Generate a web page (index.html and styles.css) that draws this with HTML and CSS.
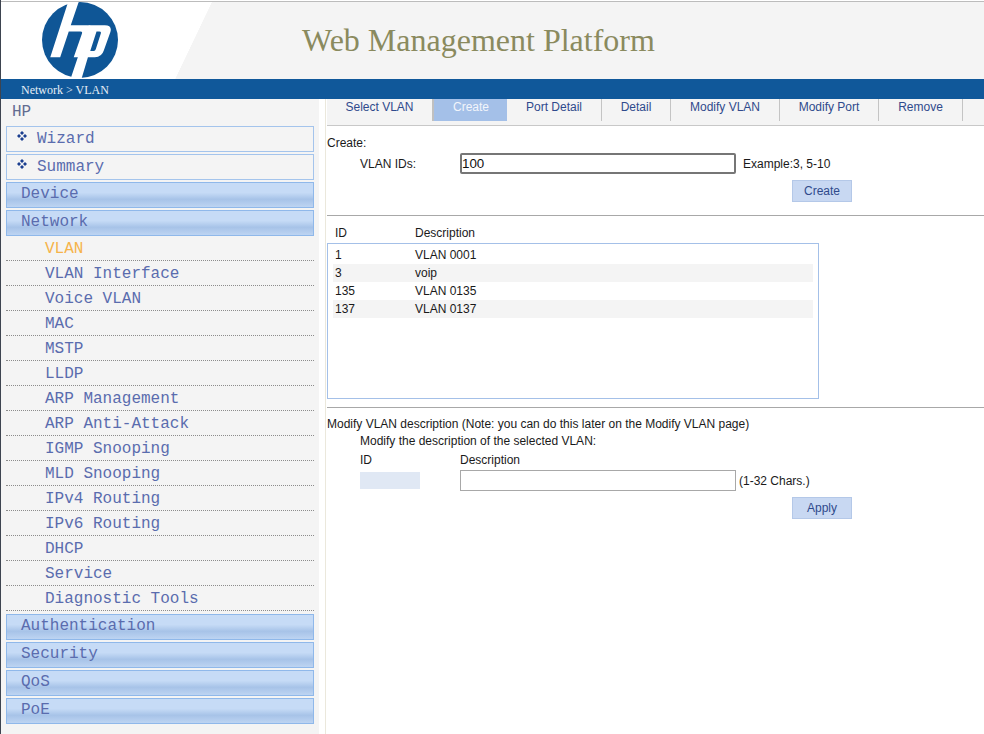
FILE: index.html
```html
<!DOCTYPE html>
<html lang="en">
<head>
<meta charset="utf-8">
<title>Web Management Platform</title>
<link rel="stylesheet" href="styles.css">
</head>
<body>
<div class="page">
  <header class="masthead">
    <div class="logo-area">
      <svg class="logo" viewBox="125 5 230 230" aria-label="HP logo">
        <circle cx="240" cy="120" r="115" fill="#0f5696"/>
        <path fill="#fff" d="M205 2L237 2L212 75L262 75Q284 75 277 96L251 172L221 172L246 100Q248 94 241 94L206 94L180 172L150 172Z"/>
        <path fill="#fff" fill-rule="evenodd" d="M266 75L315 75Q338 75 332 96L312 152Q306 172 285 172L264 172L245 236L212 236ZM290 94L271 153L282 153Q286 153 288 147L303 100Q305 94 298 94Z"/>
      </svg>
    </div>
    <h1 class="title">Web Management Platform</h1>
  </header>
  <div class="crumb">Network &gt; VLAN</div>
  <div class="body-row">
    <nav class="sidebar">
      <div class="nav-root">HP</div>
      <div class="nav-btn nav-plain"><svg class="bullet" viewBox="0 0 10 10"><path d="M5 0L7 2L5 4L3 2ZM2 3L4 5L2 7L0 5ZM8 3L10 5L8 7L6 5ZM5 6L7 8L5 10L3 8Z"/></svg>Wizard</div>
      <div class="nav-btn nav-plain"><svg class="bullet" viewBox="0 0 10 10"><path d="M5 0L7 2L5 4L3 2ZM2 3L4 5L2 7L0 5ZM8 3L10 5L8 7L6 5ZM5 6L7 8L5 10L3 8Z"/></svg>Summary</div>
      <div class="nav-btn">Device</div>
      <div class="nav-btn">Network</div>
      <ul class="nav-list">
        <li class="active">VLAN</li>
        <li>VLAN Interface</li>
        <li>Voice VLAN</li>
        <li>MAC</li>
        <li>MSTP</li>
        <li>LLDP</li>
        <li>ARP Management</li>
        <li>ARP Anti-Attack</li>
        <li>IGMP Snooping</li>
        <li>MLD Snooping</li>
        <li>IPv4 Routing</li>
        <li>IPv6 Routing</li>
        <li>DHCP</li>
        <li>Service</li>
        <li>Diagnostic Tools</li>
      </ul>
      <div class="nav-btn">Authentication</div>
      <div class="nav-btn">Security</div>
      <div class="nav-btn">QoS</div>
      <div class="nav-btn">PoE</div>
    </nav>
    <main class="content">
      <div class="tabs">
        <a class="tab">Select VLAN</a>
        <a class="tab tab-on">Create</a>
        <a class="tab">Port Detail</a>
        <a class="tab">Detail</a>
        <a class="tab">Modify VLAN</a>
        <a class="tab">Modify Port</a>
        <a class="tab">Remove</a>
      </div>
      <section class="create">
        <div class="line">Create:</div>
        <div class="form-row">
          <label class="form-label">VLAN IDs:</label>
          <input class="input-main" type="text" value="100">
          <span class="hint">Example:3, 5-10</span>
        </div>
        <button class="btn" type="button">Create</button>
      </section>
      <section class="listing">
        <div class="cols"><span class="col-id">ID</span><span>Description</span></div>
        <div class="listbox">
          <div class="row"><span class="col-id">1</span><span>VLAN 0001</span></div>
          <div class="row"><span class="col-id">3</span><span>voip</span></div>
          <div class="row"><span class="col-id">135</span><span>VLAN 0135</span></div>
          <div class="row"><span class="col-id">137</span><span>VLAN 0137</span></div>
        </div>
      </section>
      <section class="modify">
        <div class="line">Modify VLAN description (Note: you can do this later on the Modify VLAN page)</div>
        <div class="line sub">Modify the description of the selected VLAN:</div>
        <div class="form-row head"><span class="form-label">ID</span><span>Description</span></div>
        <div class="form-row edit">
          <span class="form-label"><span class="id-box"></span></span>
          <input class="input-desc" type="text">
          <span class="hint-small">(1-32 Chars.)</span>
        </div>
        <button class="btn" type="button">Apply</button>
      </section>
    </main>
  </div>
</div>
</body>
</html>
```
FILE: styles.css
```css
* { box-sizing: border-box; }
html, body { margin: 0; padding: 0; height: 100%; overflow: hidden; background: #fff; }
.page {
  height: 734px;
  border-left: 1px solid #3d4450;
  display: flex;
  flex-direction: column;
  font-family: "Liberation Sans", Arial, sans-serif;
  font-size: 12px;
  color: #1a1a1a;
}
.masthead {
  height: 79px;
  flex: none;
  display: flex;
  align-items: center;
  background-color: #f4f4f4;
  background-image: linear-gradient(to bottom, #fff 0, #fff 1px, #bcbcbc 1px, #bcbcbc 2px, transparent 2px),
    linear-gradient(115.5deg, #fff 0, #fff 191px, #f4f4f4 191.5px);
  overflow: hidden;
}
.logo-area { width: 301px; flex: none; padding-left: 41px; }
.logo { display: block; width: 76px; height: 76px; margin-top: 1px; }
.title {
  margin: 2px 0 0;
  font-family: "Liberation Serif", "Times New Roman", serif;
  font-weight: 400;
  font-size: 32px;
  color: #8a8a5e;
}
.crumb {
  height: 20px;
  flex: none;
  background: #10589a;
  color: #e6eef6;
  font-family: "Liberation Serif", "Times New Roman", serif;
  font-size: 12px;
  line-height: 23px;
  padding-left: 20px;
}
.body-row { flex: 1; display: flex; min-height: 0; }
.sidebar {
  width: 318px;
  flex: none;
  background: #f4f4f4;
  padding: 0 5px;
  font-family: "Liberation Mono", "Courier New", monospace;
  font-size: 16px;
  color: #5a6cae;
  font-weight: 400;
}
.nav-root { height: 27px; line-height: 27px; padding-left: 6px; color: #626c90; }
.nav-btn {
  height: 26px;
  margin-bottom: 2px;
  border: 1px solid #8fb8ea;
  line-height: 23px;
  padding-left: 14px;
  background: linear-gradient(to bottom, #c6dbf6 0, #c6dbf6 40%, #a7c3e8 68%, #bdd4f2 100%);
}
.nav-plain {
  display: flex;
  align-items: center;
  border-color: #a4c4ec;
  background: #f4f4f4;
  padding-left: 10px;
}
.bullet { width: 10px; height: 10px; margin: -6px 10px 0 0; fill: #1b3f8f; flex: none; }
.nav-list { list-style: none; margin: -2px 0 3px; padding: 0; }
.nav-list li {
  height: 25px;
  line-height: 26px;
  padding-left: 39px;
  border-bottom: 1px dotted #8c8c8c;
}
.nav-list li.active { color: #f6b34a; }
.content {
  flex: 1;
  min-width: 0;
  margin-left: 6px;
  padding-left: 1px;
  border-left: 1px solid #ebe8dc;
}
.tabs {
  height: 27px;
  display: grid;
  grid-template-columns: 107px 73px 95px 69px 109px 99px 84px;
  align-items: start;
  justify-content: start;
  background: #f4f4f4;
  border-bottom: 1px solid #c8c8c8;
}
.tab {
  height: 22px;
  line-height: 16px;
  text-align: center;
  border-right: 1px solid #c4c4c4;
  color: #2f4a8c;
  white-space: nowrap;
}
.tab-on { background: #a4c0e8; color: #f2f5fb; border-right: 0; padding-left: 1px; }
.tab:first-child { border-right: 2px solid #c0c0c0; }
.line { line-height: 16px; }
.create {
  height: 90px;
  padding-top: 9px;
  border-bottom: 1px solid #a8a8a8;
}
.form-row { display: flex; align-items: center; padding-left: 33px; }
.create .form-row { margin-top: 2px; }
.form-label { width: 100px; flex: none; }
.input-main {
  width: 276px;
  height: 21px;
  padding: 1px 0;
  border: 2px solid #767676;
  border-radius: 2px;
  font: 13.33px "Liberation Sans", Arial, sans-serif;
  color: #111;
  outline: 0;
}
.hint { margin-left: 7px; }
.btn {
  display: block;
  width: 60px;
  height: 22px;
  margin: 6px 0 0 465px;
  padding: 0;
  background: #c8d8f2;
  border: 1px solid #b4c8e8;
  color: #2f4a8c;
  font: 12px "Liberation Sans", Arial, sans-serif;
}
.listing {
  height: 192px;
  padding-top: 9px;
  border-bottom: 1px solid #a8a8a8;
}
.cols { display: flex; line-height: 16px; padding-left: 8px; }
.col-id { width: 80px; flex: none; }
.listbox {
  width: 492px;
  height: 156px;
  margin-top: 2px;
  padding: 2px 5px;
  border: 1px solid #a4c0e8;
}
.row { display: flex; height: 18px; line-height: 18px; padding-left: 2px; }
.row:nth-child(even) { background: #f4f4f4; }
.modify { padding-top: 8px; }
.sub { margin: 1px 0 0 33px; }
.head { margin-top: 3px; line-height: 16px; }
.edit { margin-top: 2px; }
.id-box { display: block; width: 60px; height: 17px; background: #e0e8f4; }
.input-desc {
  width: 276px;
  height: 21px;
  border: 1px solid #a8a8a8;
  outline: 0;
  padding: 1px 2px;
}
.hint-small { margin-left: 3px; font-size: 12px; }
```
